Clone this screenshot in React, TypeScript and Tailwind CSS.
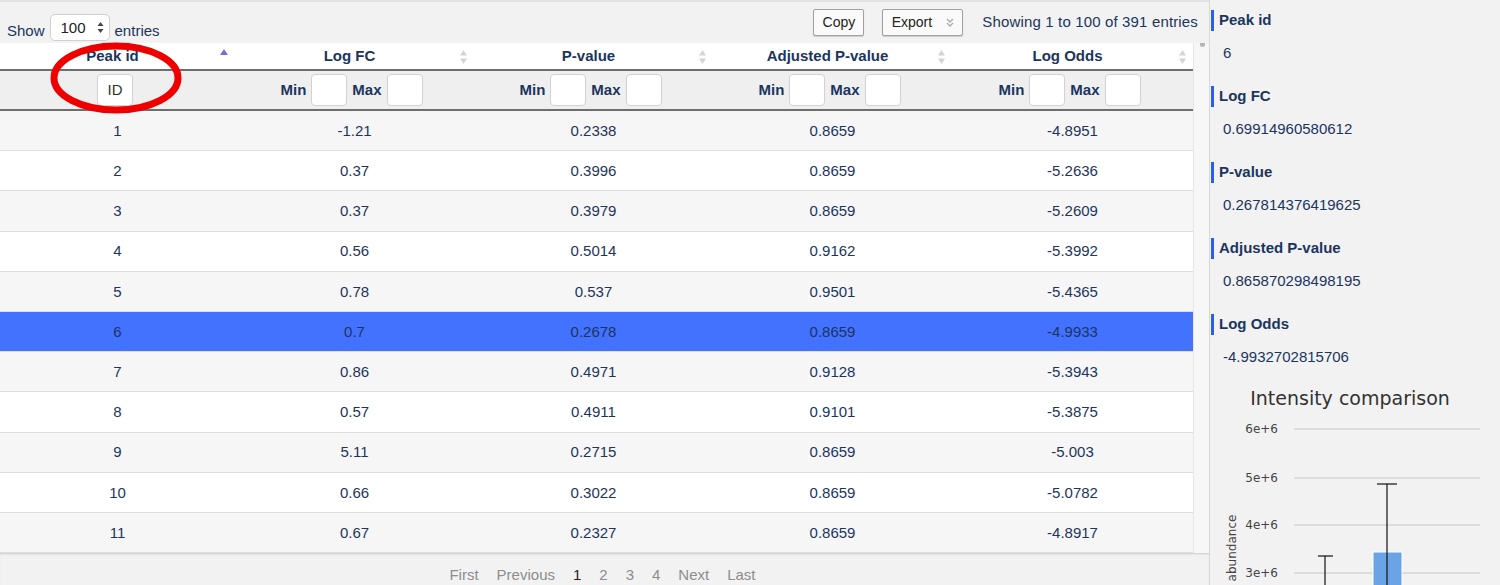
import React from "react";

const rows: string[][] = [
    ["1", "-1.21", "0.2338", "0.8659", "-4.8951"],
    ["2", "0.37", "0.3996", "0.8659", "-5.2636"],
    ["3", "0.37", "0.3979", "0.8659", "-5.2609"],
    ["4", "0.56", "0.5014", "0.9162", "-5.3992"],
    ["5", "0.78", "0.537", "0.9501", "-5.4365"],
    ["6", "0.7", "0.2678", "0.8659", "-4.9933"],
    ["7", "0.86", "0.4971", "0.9128", "-5.3943"],
    ["8", "0.57", "0.4911", "0.9101", "-5.3875"],
    ["9", "5.11", "0.2715", "0.8659", "-5.003"],
    ["10", "0.66", "0.3022", "0.8659", "-5.0782"],
    ["11", "0.67", "0.2327", "0.8659", "-4.8917"],
];

const details = [
    { label: "Peak id", value: "6" },
    { label: "Log FC", value: "0.69914960580612" },
    { label: "P-value", value: "0.267814376419625" },
    { label: "Adjusted P-value", value: "0.865870298498195" },
    { label: "Log Odds", value: "-4.9932702815706" },
];

const cols = "grid grid-cols-[235px_239px_239px_239px_241px]";

const SortBoth = () => (
    <svg width="9" height="16" viewBox="0 0 9 16" className="absolute right-[6px] top-[6px]">
        <path d="M4.5 1 L8 6.5 L1 6.5 Z" fill="#d4d4d4" />
        <path d="M4.5 15 L8 9.5 L1 9.5 Z" fill="#d4d4d4" />
    </svg>
);

const SortAsc = () => (
    <svg width="10" height="8" viewBox="0 0 10 8" className="absolute right-[6px] top-[5px]">
        <path d="M5 1 L9 7 L1 7 Z" fill="#7070dd" />
    </svg>
);

const Box = () => <div className="h-[32px] w-[36px] rounded-[4px] border border-[#d2d2d2] bg-white" />;

const MinMax = () => (
    <div className="flex items-center justify-center gap-[5px] pr-[6px] font-bold">
        <span>Min</span>
        <Box />
        <span>Max</span>
        <Box />
    </div>
);

const App = () => {
    return (
        <div className="relative flex h-[585px] w-[1500px] overflow-hidden bg-[#f2f2f2] font-['Liberation_Sans',Arial,sans-serif] text-[15px] text-[#1c355e]">
            {/* Table pane */}
            <div className="flex w-[1210px] shrink-0 flex-col border-r border-[#d8d8d8]">
                {/* Toolbar */}
                <div className="flex h-[43px] shrink-0 items-start border-t-2 border-[#e2e2e2]">
                    <div className="ml-[7px] mt-[11px] flex items-center gap-[5px]">
                        <span className="pt-[7px]">Show</span>
                        <div className="flex h-[27px] w-[60px] items-center justify-between rounded-[5px] border border-[#d0d0d0] bg-white pl-[10px] pr-[5px] text-[#222]">
                            <span>100</span>
                            <svg width="7" height="13" viewBox="0 0 7 13">
                                <path d="M3.5 1 L6.5 5 L0.5 5 Z" fill="#444" />
                                <path d="M3.5 12 L6.5 8 L0.5 8 Z" fill="#444" />
                            </svg>
                        </div>
                        <span className="pt-[7px]">entries</span>
                    </div>
                    <div className="ml-auto mt-[7px] flex items-center gap-[18px]">
                        <button className="flex h-[27px] w-[51px] items-center justify-center rounded-[2px] border border-[#a0a0a0] bg-[#fafafa] text-[14px] text-[#222] shadow-[0_1px_1px_rgba(0,0,0,0.15)]">
                            Copy
                        </button>
                        <button className="flex h-[27px] w-[81px] items-center justify-center gap-[14px] rounded-[2px] border border-[#a0a0a0] bg-[#fafafa] text-[14px] text-[#222] shadow-[0_1px_1px_rgba(0,0,0,0.15)]">
                            <span>Export</span>
                            <svg width="8" height="9" viewBox="0 0 8 9">
                                <path d="M1 1 L4 4 L7 1 M1 5 L4 8 L7 5" stroke="#aaa" strokeWidth="1.3" fill="none" />
                            </svg>
                        </button>
                    </div>
                    <span className="ml-[19px] mr-[11px] mt-[9px] tracking-[0.15px]">Showing 1 to 100 of 391 entries</span>
                </div>

                <div className="flex">
                    {/* Table */}
                    <div className="w-[1193px] shrink-0">
                        <div className={`${cols} h-[28px] border-b-2 border-[#6e6e6e] bg-white font-bold`}>
                            {["Peak id", "Log FC", "P-value", "Adjusted P-value", "Log Odds"].map((h, i) => (
                                <div key={h} className="relative flex items-center justify-center pl-[8px] pr-[18px]">
                                    {h}
                                    {i === 0 ? <SortAsc /> : <SortBoth />}
                                </div>
                            ))}
                        </div>
                        <div className={`${cols} h-[40px] border-b-2 border-[#6e6e6e] bg-[#efefef]`}>
                            <div className="flex items-center justify-center pr-[5px]">
                                <div className="flex h-[32px] w-[36px] items-center justify-center rounded-[4px] border border-[#d2d2d2] bg-white text-[#333]">
                                    ID
                                </div>
                            </div>
                            <MinMax />
                            <MinMax />
                            <MinMax />
                            <MinMax />
                        </div>
                        {rows.map((r, i) => (
                            <div
                                key={r[0]}
                                className={`${cols} h-[40.2px] border-b border-[#dedede] pt-[1px] ${
                                    r[0] === "6" ? "bg-[#4272ff]" : i % 2 === 0 ? "bg-[#f6f6f6]" : "bg-white"
                                }`}
                            >
                                {r.map((c, j) => (
                                    <div key={j} className="flex items-center justify-center">
                                        {c}
                                    </div>
                                ))}
                            </div>
                        ))}
                    </div>
                    {/* Scrollbar track */}
                    <div className="w-[16px] border-l border-[#e6e6e6] bg-[#f7f7f7] pl-[6px]">
                        <div className="h-[4px] w-[5px] rounded-b-full bg-[#b5b5b5]" />
                    </div>
                </div>

                {/* Pagination */}
                <div className="flex flex-1 items-start justify-center gap-[18px] border-t border-[#d6d6d6] pt-[10px] pr-[4px] text-[#8d8d8d] shadow-[inset_0_1px_2px_rgba(0,0,0,0.06)]">
                    <span>First</span>
                    <span>Previous</span>
                    <span className="text-[#222]">1</span>
                    <span>2</span>
                    <span>3</span>
                    <span>4</span>
                    <span>Next</span>
                    <span>Last</span>
                </div>
            </div>

            {/* Details pane */}
            <div className="flex flex-1 flex-col pt-[10px]">
                {details.map((d) => (
                    <div key={d.label} className="mb-[23px]">
                        <div className="flex h-[21px] items-center">
                            <div className="ml-[1px] mr-[5px] h-[21px] w-[3px] bg-[#2d5cf5]" />
                            <span className="font-bold">{d.label}</span>
                        </div>
                        <div className="mt-[12px] h-[20px] pl-[13px] leading-[20px]">{d.value}</div>
                    </div>
                ))}
                <svg width="290" height="205" viewBox="0 0 290 205" className="-mt-[10px] shrink-0">
                    <text x="140" y="25" textAnchor="middle" fontFamily="DejaVu Sans, sans-serif" fontSize="19" fill="#333">
                        Intensity comparison
                    </text>
                    {[
                        { y: 49, t: "6e+6" },
                        { y: 98, t: "5e+6" },
                        { y: 145, t: "4e+6" },
                        { y: 193, t: "3e+6" },
                    ].map((g) => (
                        <g key={g.t}>
                            <line x1="84" x2="270" y1={g.y} y2={g.y} stroke="#c8c8c8" strokeWidth="1" />
                            <text x="68" y={g.y + 4} textAnchor="end" fontFamily="DejaVu Sans, sans-serif" fontSize="12" fill="#444">
                                {g.t}
                            </text>
                        </g>
                    ))}
                    <text
                        x="0"
                        y="0"
                        transform="translate(26 168) rotate(-90)"
                        textAnchor="middle"
                        fontFamily="DejaVu Sans, sans-serif"
                        fontSize="12"
                        fill="#444"
                    >
                        abundance
                    </text>
                    <rect x="163" y="172" width="29" height="40" fill="#6aa3e6" stroke="#fff" strokeWidth="1" />
                    <line x1="177" x2="177" y1="104" y2="210" stroke="#111" strokeWidth="1.2" />
                    <line x1="167" x2="187" y1="104" y2="104" stroke="#111" strokeWidth="1.2" />
                    <line x1="115" x2="115" y1="176" y2="210" stroke="#111" strokeWidth="1.2" />
                    <line x1="108" x2="123" y1="176" y2="176" stroke="#111" strokeWidth="1.2" />
                </svg>
            </div>

            {/* Red annotation ring */}
            <svg width="150" height="90" viewBox="0 0 150 90" className="pointer-events-none absolute left-[41px] top-[33px]">
                <ellipse cx="75" cy="45" rx="62" ry="32" fill="none" stroke="#ee0000" strokeWidth="7" />
            </svg>
        </div>
    );
};

export default App;
